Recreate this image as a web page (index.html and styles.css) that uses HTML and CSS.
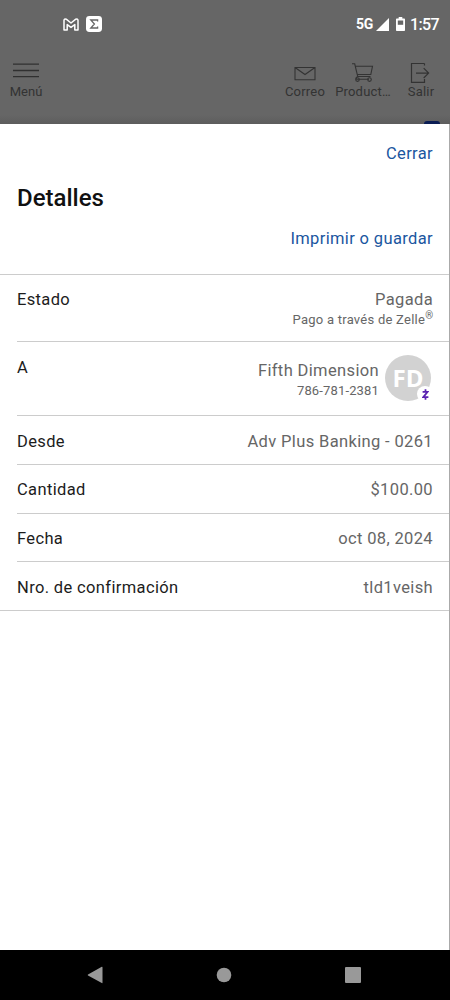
FILE: index.html
```html
<!DOCTYPE html>
<html lang="es">
<head>
<meta charset="utf-8">
<title>Detalles</title>
<link rel="stylesheet" href="styles.css">
</head>
<body>
<div class="screen">
  <header class="backdrop">
    <div class="status">
      <div class="status-left">
        <svg width="16" height="13" viewBox="0 0 16 13" fill="none" stroke="#fff" stroke-width="1.5" stroke-linejoin="round"><path d="M1 2.4Q1.2.4 3.2 1.2L8 5 12.8 1.2Q14.8.4 15 2.4V12H11.8V6.6L8 9.4 4.2 6.6V12H1Z"/></svg>
        <svg width="16" height="16" viewBox="0 0 16 16"><rect width="16" height="16" rx="3.4" fill="#fff"/><path d="M11.6 5.4V4H4.8L8.4 8 4.8 12H11.6V10.6" fill="none" stroke="#666" stroke-width="1.3"/></svg>
      </div>
      <div class="status-right">
        <span class="network">5G</span>
        <svg class="signal" width="13" height="13" viewBox="0 0 13 13"><path d="M13 0V13H0Z" fill="#fff"/></svg>
        <svg class="battery" width="9" height="14" viewBox="0 0 9 14"><path d="M2.7 0H6.3V1.5H8.2Q9 1.5 9 2.3V13.2Q9 14 8.2 14H.8Q0 14 0 13.2V2.3Q0 1.5.8 1.5H2.7Z" fill="#fff"/><path d="M1.8 3.5H7.2V7.8H1.8Z" fill="#666"/></svg>
        <span class="clock">1:57</span>
      </div>
    </div>
    <nav class="toolbar">
      <div class="tool tool-menu">
        <svg width="26" height="22" viewBox="0 0 26 22" fill="none" stroke="#303030" stroke-width="1.3"><path d="M0 3.2H26M0 9.5H26M0 15.6H26"/></svg>
        <span>Menú</span>
      </div>
      <div class="tool tool-mail">
        <svg width="22" height="22" viewBox="0 0 22 22" fill="none" stroke="#333" stroke-width="1.1"><path d="M1 6.5H21V18.7H1ZM1 6.5L11 13.5 21 6.5"/></svg>
        <span>Correo</span>
      </div>
      <div class="tool tool-products">
        <svg width="22" height="22" viewBox="0 0 22 22" fill="none" stroke="#333" stroke-width="1.1"><path d="M0 2.8H2.7L5.7 15.5H18.5M3.5 5.3H20.5L18.8 13.5H5.3M5.7 15.5Q3.3 16.5 4.5 18.3H17"/><circle cx="5.5" cy="18.6" r="1.8"/><circle cx="17.5" cy="18.6" r="1.8"/></svg>
        <span>Product…</span>
      </div>
      <div class="tool tool-exit">
        <svg width="22" height="22" viewBox="0 0 22 22" fill="none" stroke="#333" stroke-width="1.2"><path d="M14.5 2.5H1.5V21.4H14.5V18M14.5 2.5V4.5M6 12.1H18.6M13.7 7.2L18.6 12.1 13.7 17"/></svg>
        <span>Salir</span>
      </div>
    </nav>
    <i class="tab-peek"></i>
  </header>
  <main class="sheet">
    <div class="close-row"><a class="link close">Cerrar</a></div>
    <h1>Detalles</h1>
    <div class="print-row"><a class="link print">Imprimir o guardar</a></div>
    <dl class="details">
      <div class="row row-status">
        <dt>Estado</dt>
        <dd><div>Pagada</div><div class="sub via">Pago a través de Zelle<sup>®</sup></div></dd>
      </div>
      <div class="row row-to">
        <dt>A</dt>
        <dd class="payee">
          <div><div>Fifth Dimension</div><div class="sub phone">786-781-2381</div></div>
          <div class="avatar">FD
            <span class="badge"><svg width="7" height="11" viewBox="0 0 8 12" fill="none" stroke="#5a22b0" stroke-width="2"><path d="M.7 3H6.4L1.5 9H7.3M4 0V3M4 9V12"/></svg></span>
          </div>
        </dd>
      </div>
      <div class="row"><dt>Desde</dt><dd class="account">Adv Plus Banking - 0261</dd></div>
      <div class="row"><dt>Cantidad</dt><dd>$100.00</dd></div>
      <div class="row"><dt>Fecha</dt><dd>oct 08, 2024</dd></div>
      <div class="row"><dt>Nro. de confirmación</dt><dd>tld1veish</dd></div>
    </dl>
  </main>
  <footer class="navbar">
    <svg width="16" height="18" viewBox="0 0 16 18"><path d="M14.8.8Q15.5.5 15.5 1.4V16.6Q15.5 17.5 14.8 17.1L1 9.5Q.4 9 1 8.5Z" fill="#999"/></svg>
    <svg width="16" height="16" viewBox="0 0 16 16"><circle cx="8" cy="8" r="7.3" fill="#999"/></svg>
    <svg width="16" height="16" viewBox="0 0 16 16"><rect width="16" height="16" rx="1" fill="#999"/></svg>
  </footer>
</div>
</body>
</html>
```
FILE: styles.css
```css
* { box-sizing: border-box; }
body { margin: 0; font-family: Roboto, "Liberation Sans", sans-serif; }
svg { display: block; flex: none; }
.screen { width: 450px; height: 1000px; display: flex; flex-direction: column; background: #fff; overflow: hidden; }

.backdrop { position: relative; height: 124px; background: linear-gradient(#666 0 115px, #5d5d5d 124px); }
.status { height: 48px; display: flex; justify-content: space-between; align-items: center; padding: 0 11px 0 63px; color: #fff; }
.status-left { display: flex; align-items: center; gap: 7px; }
.status-right { display: flex; align-items: center; }
.network { font-size: 14px; font-weight: 700; letter-spacing: -.4px; }
.signal { margin-left: 3px; }
.battery { margin: 0 5px 0 7px; }
.clock { font-size: 16px; font-weight: 500; letter-spacing: -.6px; }
.toolbar { display: flex; padding: 13px 0 0 0; color: #333; }
.tool { display: flex; flex-direction: column; align-items: center; font-size: 13px; line-height: 16px; letter-spacing: .2px; white-space: nowrap; }
.tool span { padding-top: 1px; }
.tool-menu { width: 52px; letter-spacing: 0; }
.tool-mail { width: 50px; margin-left: 228px; }
.tool-products { width: 66px; }
.tool-exit { width: 50px; }
.tab-peek { position: absolute; right: 10px; bottom: 0; width: 16px; height: 3px; border-radius: 3px 3px 0 0; background: #0b1d54; }

.sheet { flex: 1; border-right: 1px solid #aaa; display: flex; flex-direction: column; color: #1c1c1c; font-size: 16.5px; letter-spacing: .36px; }
.close-row, .print-row { display: flex; justify-content: flex-end; padding-right: 16px; }
.close-row { padding-top: 20px; }
.link { color: #1a56a0; line-height: 20px; }
h1 { margin: 20px 0 0 17px; font-size: 24px; line-height: 28px; font-weight: 500; letter-spacing: 0; color: #111; }
.print-row { margin-top: 17px; }
.details { margin: 25px 0 0; border-top: 1px solid #ccc; border-bottom: 1px solid #ccc; }
.row { display: flex; justify-content: space-between; align-items: flex-start; margin-left: 17px; height: 48.8px; padding: 15.6px 16px 0 0; line-height: 20px; }
.row + .row { border-top: 1px solid #ccc; }
.row-status { height: 66px; padding-top: 15px; }
.row.row-to { height: 74px; padding-top: 16px; }
dd { margin: 0; color: #666; text-align: right; }
.sub { font-size: 13px; line-height: 20px; letter-spacing: .25px; }
.phone { letter-spacing: .15px; }
.sub sup { font-size: 10px; line-height: 0; vertical-align: 5px; letter-spacing: 0; }
.payee { display: flex; gap: 6px; margin-right: 2px; padding-top: 3px; }
.avatar { position: relative; width: 46px; height: 46px; margin-top: -6px; border-radius: 50%; background: #d2d2d2; color: #fff; font: 700 24px/45px "Open Sans", sans-serif; letter-spacing: 0; text-align: center; }
.badge { position: absolute; right: -2px; bottom: -1px; width: 16px; height: 16px; border-radius: 50%; background: #fff; display: flex; align-items: center; justify-content: center; }

.navbar { height: 50px; background: #000; display: flex; align-items: center; justify-content: space-between; padding: 0 89px 0 87px; }
```
